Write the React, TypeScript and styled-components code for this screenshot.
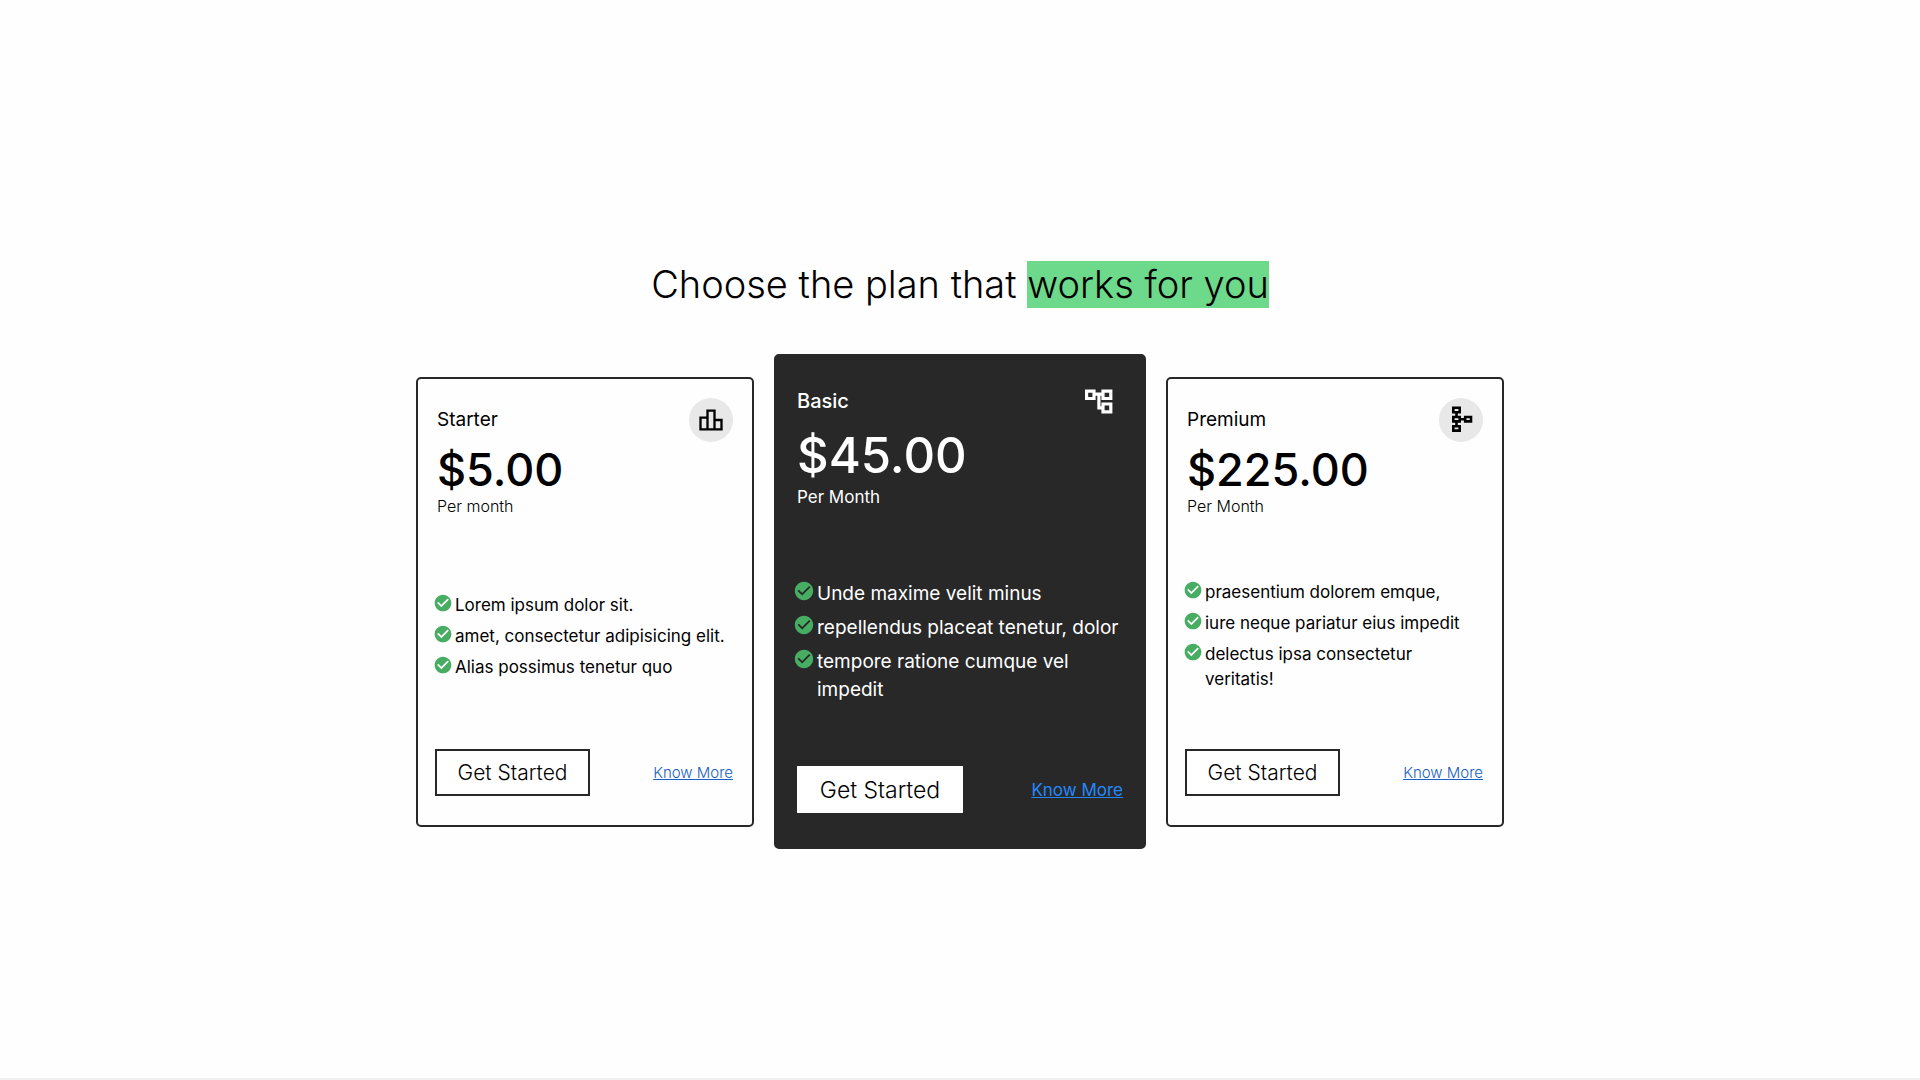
import React from "react";
import styled, { createGlobalStyle, css } from "styled-components";
import { MdCheckCircle, MdOutlineLeaderboard } from "react-icons/md";

const GlobalStyle = createGlobalStyle`
  *, *::before, *::after { box-sizing: border-box; }
  body {
    margin: 0;
    background: #fefefe;
    color: #000;
    font-family: Inter, "Noto Sans", sans-serif;
    font-weight: 300;
  }
  h1, h2, p, ul { margin: 0; padding: 0; }
`;

const Page = styled.main`
  min-height: 100vh;
  display: flex;
  flex-direction: column;
  align-items: center;
  justify-content: center;
  gap: 46px;
  padding: 56px 24px 24px;
  border-bottom: 2px solid #f0f0f0;
`;

const Heading = styled.h1`
  font-size: 38px;
  line-height: 47px;
  font-weight: 300;
  text-align: center;
`;

const Highlight = styled.span`
  background: #6dd98a;
  display: inline-block;
`;

const Plans = styled.section`
  display: flex;
  flex-wrap: wrap;
  align-items: center;
  justify-content: center;
  gap: 20px;
`;

const Card = styled.article<{ $featured?: boolean }>`
  --icon: 28px;
  --tick: 20px;
  width: 338px;
  min-height: 450px;
  display: flex;
  flex-direction: column;
  justify-content: space-between;
  padding: 19px;
  border: 2px solid #282828;
  border-radius: 5px;
  ${(p) =>
    p.$featured &&
    css`
      --icon: 31px;
      --tick: 22px;
      width: 372px;
      min-height: 495px;
      padding: 21px;
      background: #282828;
      color: #fff;
      font-weight: 400;
    `}
`;

const CardTop = styled.header`
  display: flex;
  align-items: center;
  justify-content: space-between;
`;

const PlanName = styled.h2<{ $featured?: boolean }>`
  font-size: ${(p) => (p.$featured ? 20 : 19)}px;
  line-height: 24px;
  font-weight: ${(p) => (p.$featured ? 500 : 400)};
`;

const IconDisc = styled.span<{ $featured?: boolean }>`
  display: grid;
  place-items: center;
  width: ${(p) => (p.$featured ? 48 : 44)}px;
  aspect-ratio: 1;
  border-radius: 50%;
  background: ${(p) => (p.$featured ? "transparent" : "#e8e8e8")};
  svg { width: var(--icon); height: var(--icon); }
`;

const Price = styled.p<{ $featured?: boolean }>`
  font-size: ${(p) => (p.$featured ? 49 : 45)}px;
  line-height: ${(p) => (p.$featured ? 62 : 56)}px;
  font-weight: 500;
`;

const Period = styled.p<{ $featured?: boolean }>`
  font-size: ${(p) => (p.$featured ? 17 : 16)}px;
  line-height: ${(p) => (p.$featured ? 20 : 16)}px;
`;

const Features = styled.ul<{ $featured?: boolean }>`
  list-style: none;
  display: grid;
  gap: 6px;
  padding-top: 10px;
  font-size: ${(p) => (p.$featured ? 19 : 17)}px;
  line-height: ${(p) => (p.$featured ? 28 : 25)}px;
  font-weight: 400;
`;

const Feature = styled.li`
  display: flex;
  gap: 2px;
  margin-left: -4px;
  svg {
    flex: none;
    width: var(--tick);
    height: var(--tick);
    color: #47ad63;
  }
`;

const Actions = styled.footer<{ $featured?: boolean }>`
  display: flex;
  align-items: center;
  justify-content: space-between;
  padding-bottom: ${(p) => (p.$featured ? 13 : 10)}px;
`;

const StartButton = styled.button<{ $featured?: boolean }>`
  height: 47px;
  width: ${(p) => (p.$featured ? 166 : 155)}px;
  margin-left: ${(p) => (p.$featured ? 0 : -2)}px;
  padding: 0;
  border: 2px solid ${(p) => (p.$featured ? "#fff" : "#282828")};
  background: #fff;
  color: #000;
  font: inherit;
  font-weight: 300;
  font-size: ${(p) => (p.$featured ? 23 : 21)}px;
  cursor: pointer;
`;

const MoreLink = styled.a<{ $featured?: boolean }>`
  font-size: ${(p) => (p.$featured ? 17 : 15)}px;
  color: ${(p) => (p.$featured ? "#2388ff" : "#1560c4")};
`;

const TreeIcon = () => (
  <svg viewBox="0 0 31 31" fill="none" stroke="currentColor" strokeWidth="3.2" aria-hidden="true">
    <path d="M2.6 5.1h7.4v7.4H2.6zM19 5.1h7.8v7.4H19zM19 18h7.8v7.8H19zM10 8.2h9M14.9 8.2v13.6H19" />
  </svg>
);

const BranchIcon = () => (
  <svg viewBox="0 0 28 28" fill="none" stroke="currentColor" strokeWidth="2.6" aria-hidden="true">
    <path d="M6.3 1.8h6.4v4.4H6.3zM6.3 11h6.4v4.4H6.3zM6.3 20.2h6.4v4.4H6.3zM18.2 11h5.8v4.4h-5.8zM9.5 6.2V11M9.5 15.4v4.8M12.7 13.2h5.5" />
  </svg>
);

const plans = [
  {
    name: "Starter",
    price: "$5.00",
    period: "Per month",
    icon: <MdOutlineLeaderboard />,
    features: ["Lorem ipsum dolor sit.", "amet, consectetur adipisicing elit.", "Alias possimus tenetur quo"],
  },
  {
    name: "Basic",
    price: "$45.00",
    period: "Per Month",
    icon: <TreeIcon />,
    featured: true,
    features: ["Unde maxime velit minus", "repellendus placeat tenetur, dolor", "tempore ratione cumque vel impedit"],
  },
  {
    name: "Premium",
    price: "$225.00",
    period: "Per Month",
    icon: <BranchIcon />,
    features: ["praesentium dolorem emque,", "iure neque pariatur eius impedit", "delectus ipsa consectetur veritatis!"],
  },
];

export default function App() {
  return (
    <>
      <GlobalStyle />
      <Page>
        <Heading>
          Choose the plan that <Highlight>works for you</Highlight>
        </Heading>
        <Plans>
          {plans.map(({ name, price, period, icon, featured, features }) => (
            <Card key={name} $featured={featured}>
              <div>
                <CardTop>
                  <PlanName $featured={featured}>{name}</PlanName>
                  <IconDisc $featured={featured}>{icon}</IconDisc>
                </CardTop>
                <Price $featured={featured}>{price}</Price>
                <Period $featured={featured}>{period}</Period>
              </div>
              <Features $featured={featured}>
                {features.map((feature) => (
                  <Feature key={feature}>
                    <MdCheckCircle />
                    <span>{feature}</span>
                  </Feature>
                ))}
              </Features>
              <Actions $featured={featured}>
                <StartButton type="button" $featured={featured}>Get Started</StartButton>
                <MoreLink href="#more" $featured={featured}>Know More</MoreLink>
              </Actions>
            </Card>
          ))}
        </Plans>
      </Page>
    </>
  );
}
